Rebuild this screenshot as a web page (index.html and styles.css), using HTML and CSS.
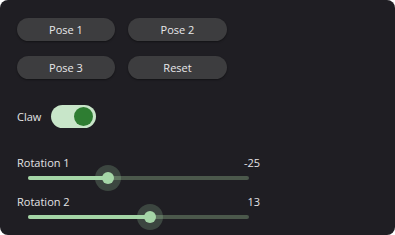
FILE: index.html
```html
<!DOCTYPE html>
<html lang="en">
<head>
    <meta charset="UTF-8">
    <title>Arm control</title>
    <link rel="stylesheet" href="styles.css">
</head>
<body>
<div class="panel">

    <div class="buttons">
        <button class="pose">Pose 1</button>
        <button class="pose">Pose 2</button>
        <button class="pose">Pose 3</button>
        <button class="pose">Reset</button>
    </div>

    <div class="claw">
        <span>Claw</span>
        <div class="switch"><div class="knob"></div></div>
    </div>

    <div class="slider first">
        <div class="slidertop">
            <span>Rotation 1</span>
            <span>-25</span>
        </div>
        <div class="track">
            <div class="fill" style="width: 36.4%;"></div>
            <div class="thumb" style="left: 36.4%;"></div>
        </div>
    </div>

    <div class="slider">
        <div class="slidertop">
            <span>Rotation 2</span>
            <span>13</span>
        </div>
        <div class="track">
            <div class="fill" style="width: 55%;"></div>
            <div class="thumb" style="left: 55%;"></div>
        </div>
    </div>

</div>
</body>
</html>
```

FILE: styles.css
```css
*{
    margin:0;
    padding:0;
    box-sizing: border-box;
}

body{
    background-color: #fff;
    font-family: "Open Sans", "Noto Sans", sans-serif;
    font-size: 11px;
    color: #e4e4e6;
}

.panel{
    width: 395px;
    height: 235px;
    background-color: #1f1e23;
    border-radius: 8px;
    padding: 18px 0 0 17px;
}

.buttons{
    display: grid;
    grid-template-columns: 98px 99px;
    column-gap: 13px;
    row-gap: 15px;
}

.pose{
    height: 23px;
    border: none;
    border-radius: 12px;
    background-color: #3d3d3f;
    color: #e8e8ea;
    font-family: inherit;
    font-size: 11px;
    box-shadow: 0 1px 2px rgba(0,0,0,0.4);
}

.claw{
    display: flex;
    align-items: center;
    gap: 10px;
    margin-top: 26px;
}

.switch{
    width: 45px;
    height: 23px;
    border-radius: 12px;
    background-color: #c8e6c9;
    display: flex;
    align-items: center;
    justify-content: flex-end;
    padding-right: 3px;
}

.knob{
    width: 19px;
    height: 19px;
    border-radius: 50%;
    background-color: #2e7d32;
}

.slider{
    width: 243px;
    margin-top: 9px;
}

.slider.first{
    margin-top: 28px;
}

.slidertop{
    display: flex;
    justify-content: space-between;
    line-height: 14px;
    height: 14px;
}

.track{
    position: relative;
    height: 16px;
    margin: 0 11px;
}

.track::before{
    content: "";
    position: absolute;
    left: 0;
    right: 0;
    top: 6px;
    height: 4px;
    border-radius: 2px;
    background-color: #4b584b;
}

.fill{
    position: absolute;
    left: 0;
    top: 6px;
    height: 4px;
    border-radius: 2px;
    background-color: #a5d6a7;
}

.thumb{
    position: absolute;
    top: 8px;
    width: 12px;
    height: 12px;
    margin: -6px 0 0 -6px;
    border-radius: 50%;
    background-color: #a5d6a7;
    box-shadow: 0 0 0 7px rgba(165,214,167,0.22);
}
```
